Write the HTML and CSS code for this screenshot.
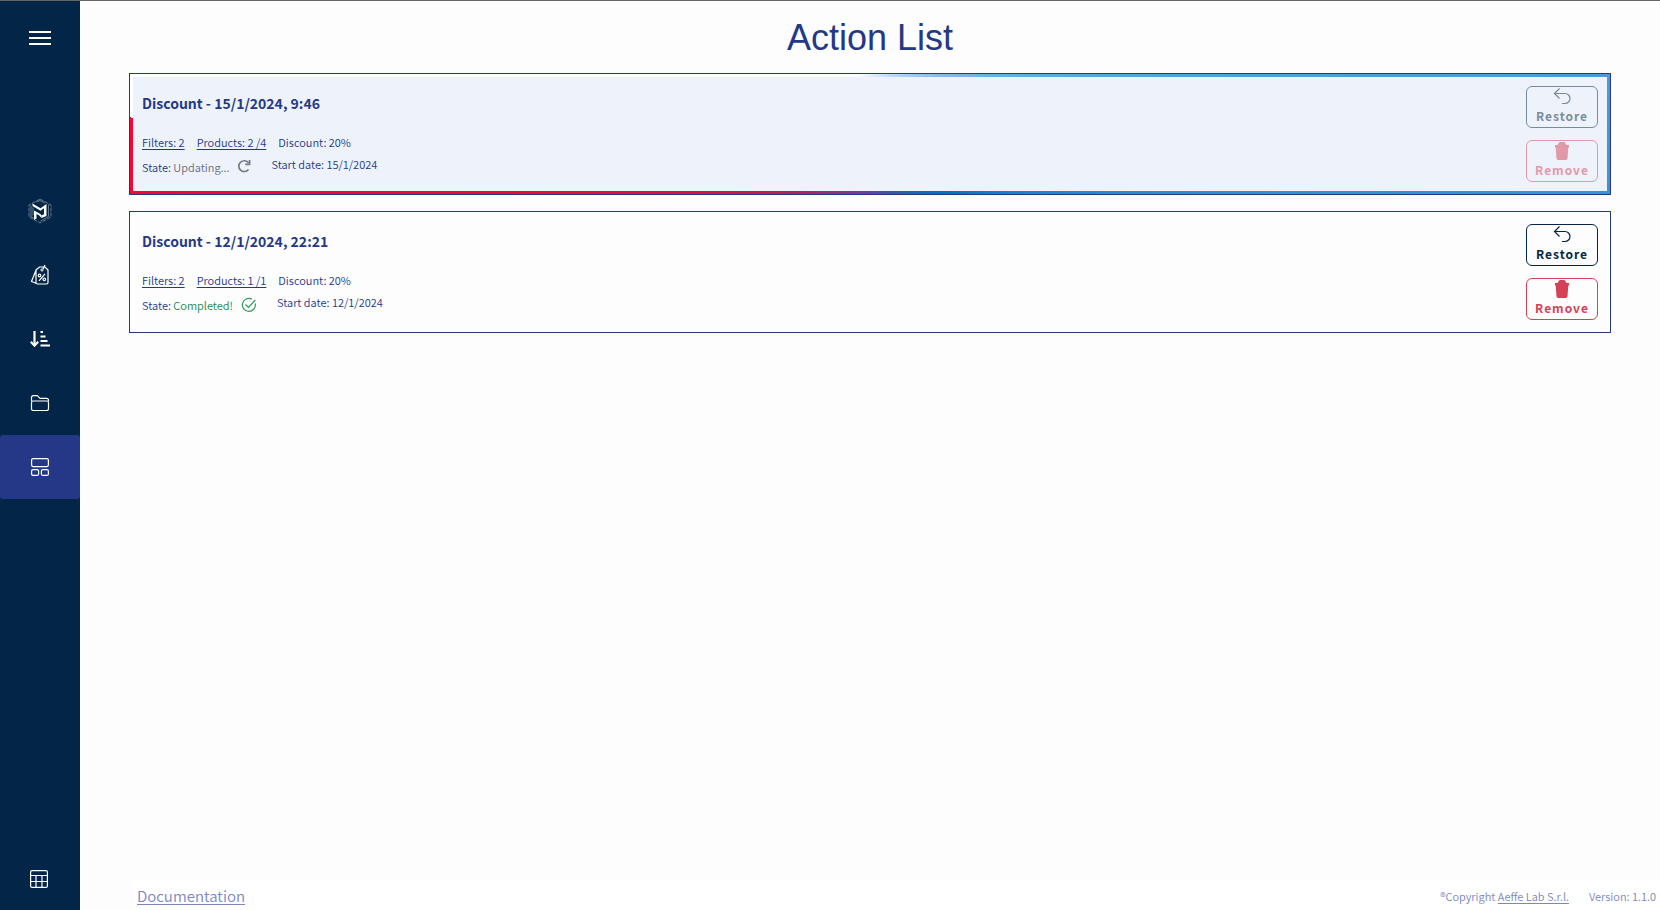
FILE: index.html
```html
<!DOCTYPE html>
<html lang="en">
<head>
<meta charset="utf-8">
<title>Action List</title>
<link rel="stylesheet" href="styles.css">
</head>
<body>
<div class="app">
  <nav class="sidebar" aria-label="Main">
    <button class="menu-toggle" aria-label="Open menu"><span class="bar"></span><span class="bar"></span><span class="bar"></span></button>
    <div class="nav-list">
      <a class="nav-item" href="#home" aria-label="Home">
        <svg width="24" height="26" viewBox="0 0 24 26" fill="none" stroke="#fff">
          <path d="M12 1 23 7v12l-11 6L1 19V7z" stroke-width=".7" opacity=".55" stroke-dasharray="4 1"/>
          <path d="M3 7.500v11l3 1.800M5 9.500v8M20.500 6.500v12l-8 4.500M8 4 12 2.500l5 2.500" stroke-width=".8" opacity=".5"/>
          <path d="M4.500 5.500 12.500 10.300 18.500 6v12l-5 2v-2.500l2.500-1.200v-6l-3.500 2.500L4.500 8z" fill="#fff" stroke="none"/>
          <path d="M6 12.500 11.500 15.500l2 1.500v3L11 17.300 8.500 16v4.500L6 22z" fill="#fff" stroke="none"/>
        </svg>
      </a>
      <a class="nav-item" href="#discounts" aria-label="Discounts">
        <svg width="20" height="22" viewBox="0 0 20 22" fill="none" stroke="#fff" stroke-width="1.200">
          <path d="M6.500 5.500 9.500 3h5.500l3 3v12.500a1.500 1.500 0 0 1-1.500 1.500h-9A1.500 1.500 0 0 1 6 18.500V6.500zM6.500 5 1.500 17.500l4.500 1.800"/>
          <circle cx="12" cy="6" r="1.100" stroke-width="1"/><path d="m13 5 2-4M15 9.800l-6 7"/>
          <circle cx="9.500" cy="11.500" r="1.300"/><circle cx="14.300" cy="15.300" r="1.300"/>
        </svg>
      </a>
      <a class="nav-item" href="#sort" aria-label="Sort">
        <svg width="20" height="18" viewBox="0 0 20 18" fill="none" stroke="#fff" stroke-width="2">
          <path d="M4.500 1v14" stroke-width="2.200"/><path d="m.8 11.800 3.700 4 3.700-4"/>
          <path d="M10.500 2h2.500M10.500 6.500h5M10.500 11h7M10.500 15.500h9.500"/>
        </svg>
      </a>
      <a class="nav-item" href="#files" aria-label="Files">
        <svg width="20" height="18" viewBox="0 0 20 18" fill="none" stroke="#fff" stroke-width="1.200" stroke-linejoin="round">
          <path d="M1.500 7V3.500A1.800 1.800 0 0 1 3.300 1.700h4L10 4.400h6.700a1.800 1.800 0 0 1 1.800 1.800V7M3 7h14a1.500 1.500 0 0 1 1.500 1.500v6.200a1.800 1.800 0 0 1-1.800 1.800H3.300a1.800 1.800 0 0 1-1.800-1.800V8.500A1.500 1.500 0 0 1 3 7z"/>
        </svg>
      </a>
      <a class="nav-item active" href="#actions" aria-label="Action list" aria-current="page">
        <svg width="20" height="20" viewBox="0 0 20 20" fill="none" stroke="#fff" stroke-width="1.200">
          <rect x="1.600" y="1.600" width="16.800" height="8" rx="1.500"/><rect x="1.600" y="12.600" width="7" height="5.800" rx="1.500"/><rect x="11.400" y="12.600" width="7" height="5.800" rx="1.500"/>
        </svg>
      </a>
    </div>
    <a class="nav-item nav-bottom" href="#table" aria-label="Table">
      <svg width="18" height="18" viewBox="0 0 18 18" fill="none" stroke="#fff" stroke-width="1.200">
        <rect x=".6" y=".6" width="16.800" height="16.800" rx="1.500"/><path d="M.6 5.500h16.800M.6 11.500h16.800M6 5.500v12M12 5.500v12"/>
      </svg>
    </a>
  </nav>
  <div class="page">
    <main class="content">
      <h1 class="title">Action List</h1>
      <section class="card updating">
        <div class="card-body">
          <div class="info">
            <h2 class="card-title">Discount - 15/1/2024, 9:46</h2>
            <div class="row"><a href="#filters">Filters: 2</a><a href="#products">Products: 2 /4</a><span>Discount: 20%</span></div>
            <div class="row state-row">
              <span class="state">State: <span class="pending">Updating...</span></span>
              <svg class="state-icon" width="14" height="14" viewBox="0 0 14 14" fill="none" stroke="#747b8c" stroke-width="1.700"><path d="M11.500 10.400A5.400 5.400 0 1 1 11.600 4"/><path d="M12.600 1v4.400H8.200" /></svg>
              <span class="start">Start date: 15/1/2024</span>
            </div>
          </div>
          <div class="actions">
            <button class="btn restore" disabled><svg width="18" height="18" viewBox="0 0 18 18" fill="none" stroke="currentColor" stroke-width="1.200"><path d="M6.500 .5 1.500 5.500l5 5M1.500 5.500H12a5 5 0 0 1 0 10H9"/></svg>Restore</button>
            <button class="btn remove" disabled><svg width="14" height="18" viewBox="0 0 14 18" fill="currentColor"><path d="M0 3h2.500L4 .5Q4.300 0 5 0h4q.7 0 1 .5L11.500 3H14v2.500h-.7l-.8 10.800q-.1 1.700-1.700 1.700H3.200q-1.600 0-1.700-1.700L.7 5.500H0z"/></svg>Remove</button>
          </div>
        </div>
      </section>
      <section class="card">
        <div class="card-body">
          <div class="info">
            <h2 class="card-title">Discount - 12/1/2024, 22:21</h2>
            <div class="row"><a href="#filters">Filters: 2</a><a href="#products">Products: 1 /1</a><span>Discount: 20%</span></div>
            <div class="row state-row">
              <span class="state">State: <span class="done">Completed!</span></span>
              <svg class="state-icon" width="16" height="16" viewBox="0 0 16 16" fill="none" stroke="#31995c" stroke-width="1.200"><path d="M14.200 6.500A6.500 6.500 0 1 1 10.800 2.100M4.500 7.500l3 3L14.300 3"/></svg>
              <span class="start">Start date: 12/1/2024</span>
            </div>
          </div>
          <div class="actions">
            <button class="btn restore"><svg width="18" height="18" viewBox="0 0 18 18" fill="none" stroke="currentColor" stroke-width="1.200"><path d="M6.500 .5 1.500 5.500l5 5M1.500 5.500H12a5 5 0 0 1 0 10H9"/></svg>Restore</button>
            <button class="btn remove"><svg width="14" height="18" viewBox="0 0 14 18" fill="currentColor"><path d="M0 3h2.500L4 .5Q4.300 0 5 0h4q.7 0 1 .5L11.500 3H14v2.500h-.7l-.8 10.800q-.1 1.700-1.700 1.700H3.200q-1.600 0-1.700-1.700L.7 5.500H0z"/></svg>Remove</button>
          </div>
        </div>
      </section>
    </main>
    <footer class="footer">
      <a class="docs" href="#docs">Documentation</a>
      <div class="legal"><span>®Copyright <a href="#aeffe">Aeffe Lab S.r.l.</a></span><span>Version: 1.1.0</span></div>
    </footer>
  </div>
</div>
</body>
</html>
```
FILE: styles.css
```css
* { box-sizing: border-box; }
body {
  margin: 0;
  background: #fdfdfd;
  color: #253887;
  font-family: "Noto Sans CJK SC", "Noto Sans", sans-serif;
}
.app { display: flex; min-height: 100vh; border-top: 1px solid #666; }
.sidebar {
  width: 80px;
  flex: none;
  display: flex;
  flex-direction: column;
  background: #032648;
}
.menu-toggle {
  height: 74px;
  padding: 0;
  border: 0;
  background: none;
  display: flex;
  flex-direction: column;
  align-items: center;
  justify-content: center;
  gap: 4px;
}
.bar { width: 22px; height: 2px; background: #fff; }
.nav-list { margin-top: 104px; }
.nav-item { height: 64px; display: flex; align-items: center; justify-content: center; border-radius: 3px; }
.nav-item.active { background: #253887; }
.nav-bottom { margin-top: auto; height: 62px; padding-right: 2px; }
.page { flex: 1; min-width: 0; display: flex; flex-direction: column; }
.content { flex: 1; padding: 0 49px; }
.title {
  margin: 0 0 15px;
  padding-top: 17px;
  font: 400 36px/40px "Liberation Sans", Arial, sans-serif;
  text-align: center;
}
.card { border: 1px solid #253887; padding: 3px; margin-bottom: 16px; }
.updating { background: conic-gradient(from 271deg at 50% 47%, #fff 0deg, #fff 74deg, #0070cc 217deg, #ff0033 359deg, #ff0033 360deg); }
.card-body { display: flex; justify-content: space-between; padding: 9px; }
.updating .card-body { background: #eef3fb; }
.card-title { margin: 7px 0 19px; font-size: 14px; line-height: 20px; font-weight: 700; }
.row { display: flex; gap: 12px; font-size: 11px; line-height: 20px; font-weight: 350; }
.row a { color: inherit; text-underline-offset: 2px; }
.state-row { gap: 0; margin-top: 2px; align-items: flex-start; }
.state { padding-top: 3px; }
.state-icon { margin: 5px 20px 0 8px; }
.pending { color: #666d80; }
.done { color: #23894e; }
.actions { display: flex; flex-direction: column; gap: 12px; }
.btn {
  width: 72px;
  height: 42px;
  padding: 0;
  border: 1px solid;
  border-radius: 6px;
  background: none;
  display: flex;
  flex-direction: column;
  align-items: center;
  font: 700 12px/20px "Noto Sans CJK SC", "Noto Sans", sans-serif;
  letter-spacing: 1px;
}
.btn svg { margin-top: 1px; }
.restore { color: #032648; }
.remove { color: #d54155; }
.btn:disabled { opacity: .5; }
.footer {
  display: flex;
  align-items: center;
  justify-content: space-between;
  margin-left: 53px;
  height: 29px;
  padding: 0 4px;
  background: #fff;
  color: #7b87bd;
  font-weight: 350;
}
.footer a { color: inherit; text-underline-offset: 2px; }
.docs { font-size: 15px; }
.legal { display: flex; gap: 20px; font-size: 11px; }
```
